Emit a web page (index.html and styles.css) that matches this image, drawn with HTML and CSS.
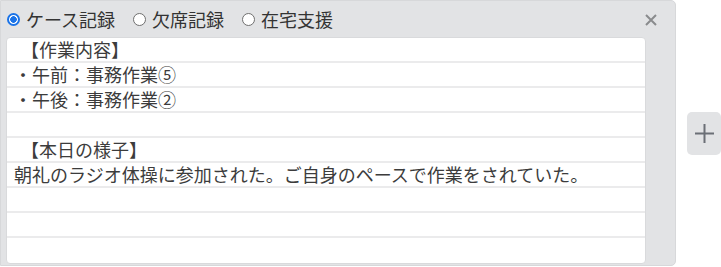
FILE: index.html
```html
<!DOCTYPE html>
<html lang="ja">
<head>
<meta charset="utf-8">
<link rel="stylesheet" href="styles.css">
</head>
<body>
<div class="wrap">
  <div class="panel">
    <div class="head">
      <label class="opt"><span class="radio checked"></span>ケース記録</label>
      <label class="opt"><span class="radio"></span>欠席記録</label>
      <label class="opt"><span class="radio"></span>在宅支援</label>
      <span class="close"><svg width="12" height="12" viewBox="0 0 12 12"><path d="M1 1L11 11M11 1L1 11" stroke="#8a8b8d" stroke-width="2"/></svg></span>
    </div>
    <div class="sheet">
      <div class="row br">【作業内容】</div>
      <div class="row">・午前：事務作業⑤</div>
      <div class="row">・午後：事務作業②</div>
      <div class="row"></div>
      <div class="row br">【本日の様子】</div>
      <div class="row">朝礼のラジオ体操に参加された。ご自身のペースで作業をされていた。</div>
      <div class="row"></div>
      <div class="row"></div>
      <div class="row last"></div>
    </div>
  </div>
  <div class="side">
    <button class="add"><svg width="19" height="19" viewBox="0 0 19 19"><path d="M9.5 0V19M0 9.5H19" stroke="#6b6f76" stroke-width="2"/></svg></button>
  </div>
</div>
</body>
</html>
```
FILE: styles.css
```css
html, body {
  margin: 0;
  padding: 0;
  background: #fff;
}
body {
  font-family: "Noto Sans CJK JP", "Noto Sans", sans-serif;
  color: #3c3c3c;
}
.wrap {
  display: flex;
  align-items: flex-start;
  width: 721px;
  height: 267px;
  overflow: hidden;
}
.panel {
  width: 676px;
  height: 266px;
  box-sizing: border-box;
  background: #e2e3e5;
  border: 1px solid #d7d8da;
  border-radius: 0 5px 5px 0;
  padding: 0 29px 0 5px;
  display: flex;
  flex-direction: column;
}
.head {
  height: 36px;
  display: flex;
  align-items: center;
  position: relative;
  font-size: 18px;
  line-height: 20px;
  padding-left: 1px;
}
.opt {
  display: flex;
  align-items: center;
  margin-right: 18px;
  color: #333;
}
.radio {
  width: 13px;
  height: 13px;
  box-sizing: border-box;
  border: 1px solid #6f6f6f;
  border-radius: 50%;
  background: #fff;
  margin-right: 6px;
  margin-top: 1px;
}
.radio.checked {
  border: 2px solid #1a73e8;
  background: radial-gradient(circle, #1a73e8 0, #1a73e8 3px, #fff 3.6px);
}
.close {
  position: absolute;
  left: 639px;
  top: 13px;
  display: flex;
}
.sheet {
  background: #fff;
  border: 1px solid #d9dadc;
  border-radius: 4px;
  height: 225px;
  overflow: hidden;
  font-size: 18px;
}
.row {
  height: 23px;
  line-height: 23px;
  border-bottom: 2px solid #ebebec;
  padding-left: 7px;
  white-space: nowrap;
}
.row.br { padding-left: 14px; }
.row.last { border-bottom: 0; }
.side {
  flex: 1;
  display: flex;
  justify-content: flex-end;
  padding-top: 112px;
}
.add {
  width: 34px;
  height: 43px;
  border: 0;
  border-radius: 5px;
  background: #e2e3e5;
  display: flex;
  align-items: center;
  justify-content: center;
  padding: 0;
}
```
